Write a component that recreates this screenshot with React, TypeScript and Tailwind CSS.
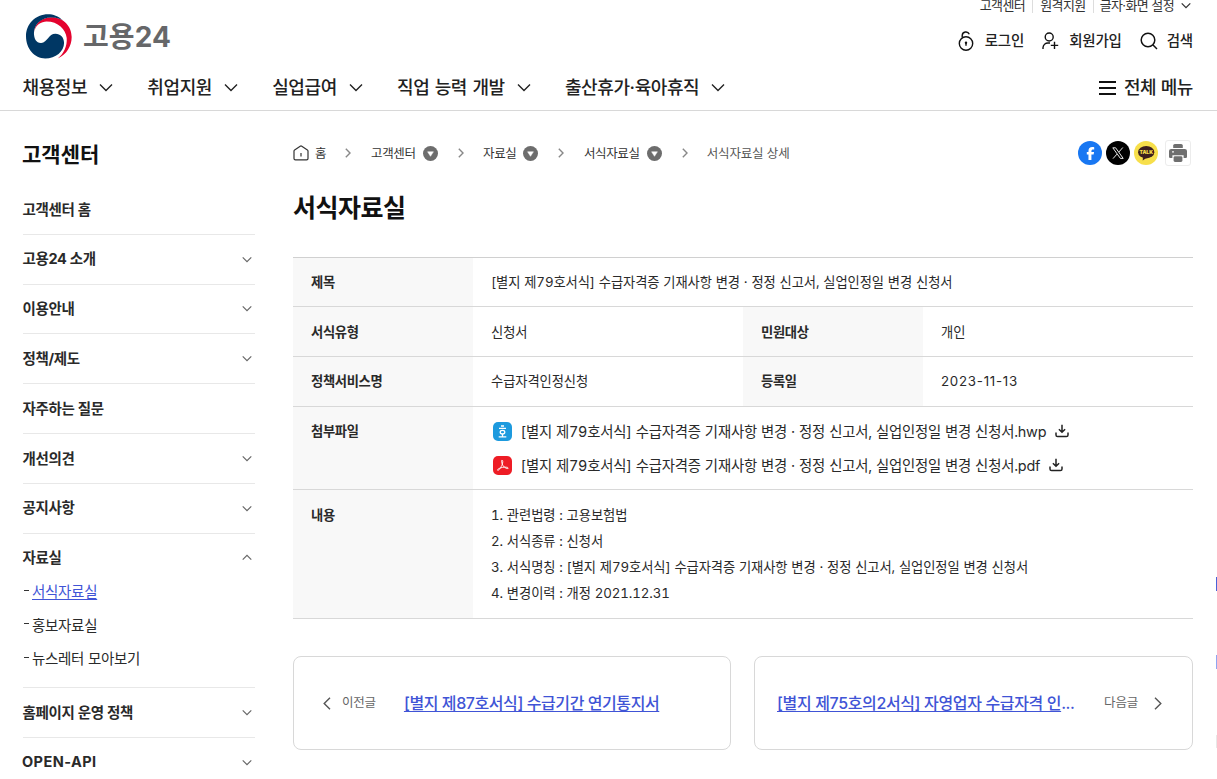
import { FaFacebookF } from 'react-icons/fa6';

const NAV = ['채용정보', '취업지원', '실업급여', '직업 능력 개발', '출산휴가·육아휴직'];

const SIDE_MENU = [
  { label: '고객센터 홈', arrow: false },
  { label: '고용24 소개', arrow: true },
  { label: '이용안내', arrow: true },
  { label: '정책/제도', arrow: true },
  { label: '자주하는 질문', arrow: false },
  { label: '개선의견', arrow: true },
  { label: '공지사항', arrow: true },
  { label: '자료실', arrow: true, children: ['서식자료실', '홍보자료실', '뉴스레터 모아보기'] },
  { label: '홈페이지 운영 정책', arrow: true },
  { label: 'OPEN-API', arrow: true, latin: true },
];

const TITLE = '[별지 제79호서식] 수급자격증 기재사항 변경 · 정정 신고서, 실업인정일 변경 신청서';

function Chevron({ className, d = 'M1 1.5 L7 7.5 L13 1.5', box = '0 0 14 9', stroke = 1.4 }: any) {
  return (
    <svg viewBox={box} className={className} fill="none" stroke="currentColor" strokeWidth={stroke}>
      <path d={d} />
    </svg>
  );
}

function Logo() {
  return (
    <svg viewBox="78 43 139 135" className="w-[46px] h-[45px] shrink-0">
      <path
        fill="#e4032e"
        d="M103 97 C106 75 125 65 140 65 C175 65 198 88 201 115 C203 140 192 162 174 177 C200 165 216 140 216 112 C216 80 192 52 155 52 C125 52 103 72 103 97Z"
      />
      <path
        fill="#003764"
        d="M190 62 C175 48 160 43 145 43 C106 43 78 73 78 110 C78 148 104 177 136 177 C168 177 193 155 193 130 C193 113 182 102 167 102 C146 102 143 128 124 130 C110 131 102 118 102 100 C102 72 128 50 158 53 C171 54 182 57 190 62Z"
      />
    </svg>
  );
}

function LockIcon() {
  return (
    <svg viewBox="0 0 16 20" className="w-4 h-5" fill="none" stroke="#111" strokeWidth="1.4">
      <circle cx="8" cy="12.5" r="6.7" />
      <path d="M4.2 6.5 V4.5 A3.7 3.7 0 0 1 11.3 3.2" />
      <circle cx="8" cy="11.7" r="1.2" fill="#111" stroke="none" />
      <path d="M8 12 V14.8" />
    </svg>
  );
}

function JoinIcon() {
  return (
    <svg viewBox="0 0 17 18" className="w-[17px] h-[18px]" fill="none" stroke="#111" strokeWidth="1.4">
      <circle cx="7.2" cy="5" r="4" />
      <path d="M1 17 V15.5 A5 5 0 0 1 6 11 H8" />
      <path d="M12.5 9.8 V17 M8.8 13.4 H16.2" />
    </svg>
  );
}

function SearchIcon() {
  return (
    <svg viewBox="0 0 18 18" className="w-[18px] h-[18px]" fill="none" stroke="#111" strokeWidth="1.5">
      <circle cx="8" cy="8" r="6.8" />
      <path d="M12.8 12.8 L17 17" />
    </svg>
  );
}

function HomeIcon() {
  return (
    <svg viewBox="0 0 16 16" className="w-4 h-4" fill="none" stroke="#333" strokeWidth="1.2">
      <path d="M1 6 Q1 5.3 1.6 4.9 L7.2 1.2 Q8 .7 8.8 1.2 L14.4 4.9 Q15 5.3 15 6 V13.4 Q15 14.8 13.6 14.8 H2.4 Q1 14.8 1 13.4Z" />
      <path d="M8 8 V11.5" />
    </svg>
  );
}

function DropDot() {
  return (
    <svg viewBox="0 0 15 15" className="w-[15px] h-[15px]">
      <circle cx="7.5" cy="7.5" r="7.5" fill="#6d6d6d" />
      <path d="M4.6 5.8 H10.4 L7.5 10.3Z" fill="#fff" stroke="#fff" strokeWidth=".5" strokeLinejoin="round" />
    </svg>
  );
}

function XIcon() {
  return (
    <svg viewBox="0 0 24 24" className="w-6 h-6" fill="none" stroke="#fff" strokeWidth=".9">
      <circle cx="12" cy="12" r="12" fill="#000" stroke="none" />
      <path d="M6.8 6.8 H9.6 L17.2 17.4 H14.4Z" />
      <path d="M16.8 6.5 L12.8 11.1 M11 13.1 L7 17.6" />
    </svg>
  );
}

function KakaoIcon() {
  return (
    <svg viewBox="0 0 24 24" className="w-6 h-6">
      <circle cx="12" cy="12" r="12" fill="#f7df4b" />
      <ellipse cx="12.2" cy="11.2" rx="8.1" ry="6.2" fill="#3c1e1e" />
      <path d="M9 15.5 L8.7 19.6 L13 16.5Z" fill="#3c1e1e" />
      <text x="12.2" y="13.1" fontSize="5" fontWeight="900" textAnchor="middle" fill="#f7df4b" fontFamily="Inter, sans-serif">TALK</text>
    </svg>
  );
}

function PrintIcon() {
  return (
    <svg viewBox="0 0 18 18" className="w-[18px] h-[18px]" fill="#6f6f6f">
      <path d="M4.2 4 V1.6 Q4.2 0 5.8 0 H12.2 Q13.8 0 13.8 1.6 V4Z" />
      <path d="M2.2 4.9 H15.8 Q18 4.9 18 7.1 V12.8 Q18 14 16.8 14 H14.6 V11.2 H3.4 V14 H1.2 Q0 14 0 12.8 V7.1 Q0 4.9 2.2 4.9Z" />
      <rect x="4.6" y="12.2" width="8.8" height="5.8" rx="1.4" />
      <circle cx="4" cy="7.8" r=".9" fill="#fff" />
    </svg>
  );
}

function HwpIcon() {
  return (
    <svg viewBox="0 0 19 19" className="w-[19px] h-[19px]" fill="none" stroke="#fff" strokeWidth="1.3">
      <rect width="19" height="19" rx="5" fill="#1d9ade" stroke="none" />
      <path d="M8 4 H11 M6 6.4 H13 M9.5 12 V14.6 M5.7 14.8 H13.3" />
      <ellipse cx="9.5" cy="10.2" rx="2.3" ry="1.8" />
    </svg>
  );
}

function PdfIcon() {
  return (
    <svg viewBox="0 0 19 19" className="w-[19px] h-[19px]" fill="none" stroke="#fff" strokeWidth=".9" strokeLinejoin="round">
      <rect width="19" height="19" rx="5" fill="#ee1c25" stroke="none" />
      <path d="M9 4.2 C10.2 4.2 9.8 6.8 9.2 8.4 C8.2 11 6.2 14.4 4.8 14.4 C3.6 14 5.8 12 9.4 11.4 C12.6 10.9 15.4 11.2 15.2 12.2 C14.8 13.2 11.6 12 10 9.6 C8.8 7.6 8 4.2 9 4.2Z" />
    </svg>
  );
}

function DownloadIcon() {
  return (
    <svg viewBox="0 0 14 14" className="w-[14px] h-[14px]" fill="none" stroke="#222" strokeWidth="1.5">
      <path d="M7 .8 V8 M3.9 5.2 L7 8.3 L10.1 5.2" />
      <path d="M1 8.5 V11 Q1 12.6 2.6 12.6 H11.4 Q13 12.6 13 11 V8.5" />
    </svg>
  );
}

function Header() {
  return (
    <header className="h-[111px] border-b border-[#d8d8d8] pl-[23px] pr-6 overflow-hidden">
      <div className="flex justify-between h-[68px]">
        <div className="flex items-start gap-[11px] pt-[14px] pl-[3px]">
          <Logo />
          <span className="mt-[1px] text-[28px] leading-[44px] font-bold text-[#666769] tracking-[0.1px]">고용24</span>
        </div>
        <div className="flex flex-col items-end">
          <div className="flex items-center h-5 -mt-[5px] text-[13px] tracking-[-0.6px] text-[#333]">
            <span className="pr-[7px] border-r border-[#ddd] leading-4">고객센터</span>
            <span className="px-[7px] border-r border-[#ddd] leading-4">원격지원</span>
            <span className="pl-[6px] leading-4">글자·화면 설정</span>
            <Chevron className="w-[10px] h-[7px] ml-[7px] mr-[2px]" stroke={1.8} />
          </div>
          <div className="flex items-center h-6 mt-[14px] text-[14.5px] font-medium tracking-[-0.2px] text-[#222]">
            <LockIcon />
            <span className="ml-[11px]">로그인</span>
            <span className="ml-[18px]"><JoinIcon /></span>
            <span className="ml-[10px]">회원가입</span>
            <span className="ml-[18px]"><SearchIcon /></span>
            <span className="ml-[9px]">검색</span>
          </div>
        </div>
      </div>
      <div className="flex items-center justify-between h-[39px] text-[18px] font-medium tracking-[-0.4px] text-[#222]">
        <nav className="flex items-center gap-[34.2px] -ml-[0.5px] [word-spacing:1px]">
          {NAV.map(n => (
            <div key={n} className="flex items-center gap-3">
              <span>{n}</span>
              <Chevron className="w-[14px] h-[9px]" />
            </div>
          ))}
        </nav>
        <div className="flex items-center gap-2">
          <svg viewBox="0 0 17 14" className="w-[17px] h-[14px] mt-[1px]" stroke="#111" strokeWidth="2">
            <path d="M0 1 H17 M0 7 H17 M0 13 H17" />
          </svg>
          <span>전체 메뉴</span>
        </div>
      </div>
    </header>
  );
}

function Sidebar() {
  return (
    <aside className="w-[232px] shrink-0">
      <h2 className="mt-[28px] -ml-px h-8 leading-8 text-[21px] font-bold tracking-[0px] text-[#111]">고객센터</h2>
      <ul className="mt-[14px]">
        {SIDE_MENU.map(m => (
          <li key={m.label} className="border-b border-[#e8e8e8] text-[#2a2a2a]">
            <div className="flex items-center justify-between h-[48.8px] pr-[3px] text-[14.5px] font-bold tracking-[-0.3px]">
              <span className={m.latin ? 'tracking-[0.45px] -ml-px' : '-ml-[0.6px]'}>{m.label}</span>
              {m.arrow && (
                <Chevron
                  className="w-[10px] h-[7px] text-[#666]"
                  stroke={1.6}
                  d={m.children ? 'M1 7.5 L7 1.5 L13 7.5' : 'M1 1.5 L7 7.5 L13 1.5'}
                />
              )}
            </div>
            {m.children && (
              <ul className="-mt-[7px] pb-[11.5px] text-[14.5px] tracking-[-0.3px]">
                {m.children.map((c, i) => (
                  <li key={c} className="flex items-center h-[33.4px]">
                    <span className="w-[5px] h-px bg-[#333] ml-[1px] mr-[3px] -mt-[3px]" />
                    <span className={i === 0 ? 'text-[#4054d6] underline underline-offset-2' : ''}>{c}</span>
                  </li>
                ))}
              </ul>
            )}
          </li>
        ))}
      </ul>
    </aside>
  );
}

function Sep() {
  return <Chevron className="w-[6px] h-[10px] text-[#888]" box="0 0 6 10" d="M.8 .8 L5 5 L.8 9.2" stroke={1.4} />;
}

function Breadcrumb() {
  return (
    <div className="flex items-center justify-between h-[26px] mt-[29px]">
      <div className="flex items-center text-[12.5px] leading-[18px] tracking-[-0.4px] text-[#333]">
        <HomeIcon />
        <span className="ml-[6px] mr-[19px] mt-[1px]">홈</span>
        <Sep />
        <span className="ml-[20px] mr-[7px] mt-[1px]">고객센터</span>
        <DropDot />
        <span className="ml-[20px]"><Sep /></span>
        <span className="ml-[19.6px] mr-[7px] mt-[1px]">자료실</span>
        <DropDot />
        <span className="ml-[20px]"><Sep /></span>
        <span className="ml-[19.6px] mr-[7px] mt-[1px]">서식자료실</span>
        <DropDot />
        <span className="ml-[20px]"><Sep /></span>
        <span className="ml-[19.2px] mt-[1px] tracking-[-0.15px] text-[#555]">서식자료실 상세</span>
      </div>
      <div className="flex items-center gap-1 pr-[2px]">
        <span className="flex items-center justify-center size-6 rounded-full bg-[#1877f2] text-white"><FaFacebookF size={13} /></span>
        <XIcon />
        <KakaoIcon />
        <span className="flex items-center justify-center size-[26px] ml-[3px] rounded-[3px] border border-[#ececec]"><PrintIcon /></span>
      </div>
    </div>
  );
}

function Th({ children }: any) {
  return <div className="w-[180px] shrink-0 bg-[#f8f8f8] pl-[18px] font-bold tracking-[-0.35px]">{children}</div>;
}

function Td({ children }: any) {
  return <div className="flex-1 pl-[18px] whitespace-nowrap">{children}</div>;
}

function DetailTable() {
  return (
    <div className="mt-[31px] border-t border-[#d0d0d0] text-[13.3px] tracking-[-0.1px] text-[#2a2a2a] tabular-nums [word-spacing:0.4px]">
      <div className="flex h-[49px] border-b border-[#d8d8d8] leading-[49px]">
        <Th>제목</Th>
        <Td>{TITLE}</Td>
      </div>
      <div className="flex h-[50px] border-b border-[#d8d8d8] leading-[50px]">
        <Th>서식유형</Th>
        <Td>신청서</Td>
        <Th>민원대상</Th>
        <Td>개인</Td>
      </div>
      <div className="flex h-[50px] border-b border-[#d8d8d8] leading-[49px]">
        <Th>정책서비스명</Th>
        <Td>수급자격인정신청</Td>
        <Th>등록일</Th>
        <Td><span className="proportional-nums tracking-[0.75px]">2023-11-13</span></Td>
      </div>
      <div className="flex h-[83px] border-b border-[#d8d8d8] leading-[49px]">
        <Th>첨부파일</Th>
        <div className="flex flex-col pl-[20px] pt-[7px] text-[14.4px] tracking-[-0.22px] whitespace-nowrap">
          <div className="flex items-center h-[34px]">
            <HwpIcon />
            <span className="ml-[8.5px] mr-[9px]">{TITLE}.hwp</span>
            <DownloadIcon />
          </div>
          <div className="flex items-center h-[34px]">
            <PdfIcon />
            <span className="ml-[8.5px] mr-[9px]">{TITLE}.pdf</span>
            <DownloadIcon />
          </div>
        </div>
      </div>
      <div className="flex h-[129px] border-b border-[#d8d8d8] leading-[50px]">
        <Th>내용</Th>
        <div className="pl-[18px] pt-[12px] leading-[26px] whitespace-nowrap">
          <p>1. 관련법령 : 고용보험법</p>
          <p>2. 서식종류 : 신청서</p>
          <p>3. 서식명칭 : {TITLE}</p>
          <p>4. 변경이력 : 개정 2021.12.31</p>
        </div>
      </div>
    </div>
  );
}

function PrevNext() {
  return (
    <div className="flex gap-[23px] mt-[37px]">
      <div className="flex items-center w-[438px] h-[94px] rounded-lg border border-[#d8d8d8] pl-[29px]">
        <Chevron className="w-[8px] h-[13px] text-[#555]" box="0 0 8 13" d="M7 .8 L1.2 6.5 L7 12.2" />
        <span className="ml-[11px] text-[12.5px] tracking-[-0.2px] text-[#666]">이전글</span>
        <span className="ml-[28px] text-[16px] font-medium tracking-[-0.42px] text-[#4054d6] underline underline-offset-2">[별지 제87호서식] 수급기간 연기통지서</span>
      </div>
      <div className="flex items-center w-[439px] h-[94px] rounded-lg border border-[#d8d8d8] pl-[22px] pr-[30px]">
        <span className="w-[299px] whitespace-nowrap text-[16px] font-medium tracking-[-0.36px] text-[#4054d6]">
          <span className="underline underline-offset-2">[별지 제75호의2서식] 자영업자 수급자격 인</span>...
        </span>
        <span className="ml-auto mr-[16px] text-[12.5px] tracking-[-0.2px] text-[#666]">다음글</span>
        <Chevron className="w-[8px] h-[13px] text-[#555]" box="0 0 8 13" d="M1 .8 L6.8 6.5 L1 12.2" />
      </div>
    </div>
  );
}

export default function App() {
  return (
    <div className="relative w-[1217px] h-[779px] overflow-hidden bg-white font-['Inter','Noto_Sans_CJK_KR',sans-serif]">
      <Header />
      <div className="flex gap-[38px] pl-[23px] pr-6">
        <Sidebar />
        <main className="w-[900px]">
          <Breadcrumb />
          <h1 className="mt-[24px] h-[36px] leading-[36px] text-[25px] font-bold tracking-[-0.5px] text-[#111]">서식자료실</h1>
          <DetailTable />
          <PrevNext />
        </main>
      </div>
      {/* edge of the floating quick menu */}
      <span className="absolute right-0 top-[577px] w-px h-[14px] bg-[#4a62d8]" />
      <span className="absolute right-0 top-[655px] w-px h-[14px] bg-[#8fa5f2]" />
      <span className="absolute right-0 top-[735px] w-px h-[13px] bg-[#e8e8e8]" />
    </div>
  );
}
